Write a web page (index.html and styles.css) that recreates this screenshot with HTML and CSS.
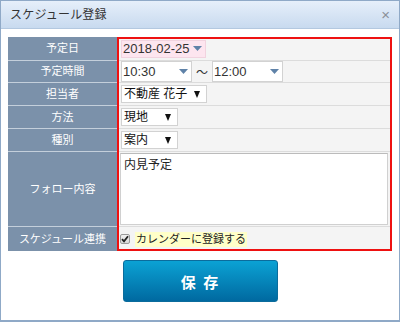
FILE: index.html
```html
<!DOCTYPE html>
<html lang="ja">
<head>
<meta charset="utf-8">
<link rel="stylesheet" href="styles.css">
</head>
<body>
<div class="window">
  <div class="titlebar">
    <span class="title">スケジュール登録</span>
    <span class="close">×</span>
  </div>
  <div class="content">
    <div class="form">
      <div class="lbl r1">予定日</div>
      <div class="val r1">
        <div class="date"><span>2018-02-25</span><svg class="tri" width="9" height="5" viewBox="0 0 9 5"><path d="M0 0H9L4.5 5Z" fill="#5f82a8"/></svg></div>
      </div>
      <div class="lbl r2">予定時間</div>
      <div class="val r2">
        <div class="time">10:30<svg class="tri" width="9" height="5" viewBox="0 0 9 5"><path d="M0 0H9L4.5 5Z" fill="#5f82a8"/></svg></div>
        <span class="tilde">～</span>
        <div class="time">12:00<svg class="tri" width="9" height="5" viewBox="0 0 9 5"><path d="M0 0H9L4.5 5Z" fill="#5f82a8"/></svg></div>
      </div>
      <div class="lbl r3">担当者</div>
      <div class="val r3">
        <div class="sel w86">不動産 花子<svg class="btri" width="6" height="7" viewBox="0 0 6 7"><path d="M0 0H6L3 7Z" fill="#111"/></svg></div>
      </div>
      <div class="lbl r4">方法</div>
      <div class="val r4">
        <div class="sel w57">現地<svg class="btri" width="6" height="7" viewBox="0 0 6 7"><path d="M0 0H6L3 7Z" fill="#111"/></svg></div>
      </div>
      <div class="lbl r5">種別</div>
      <div class="val r5">
        <div class="sel w57">案内<svg class="btri" width="6" height="7" viewBox="0 0 6 7"><path d="M0 0H6L3 7Z" fill="#111"/></svg></div>
      </div>
      <div class="lbl r6">フォロー内容</div>
      <div class="val r6">
        <div class="textarea">内見予定</div>
      </div>
      <div class="lbl r7">スケジュール連携</div>
      <div class="val r7">
        <span class="check"><svg width="8" height="8" viewBox="0 0 8 8"><path d="M1 4.2L3 6.3L7 1.2" fill="none" stroke="#222" stroke-width="1.8"/></svg></span>
        <span class="chklabel">カレンダーに登録する</span>
      </div>
      <div class="highlight"></div>
    </div>
    <div class="actions">
      <button class="save">保 存</button>
    </div>
  </div>
</div>
</body>
</html>
```
FILE: styles.css
```css
html, body {
  margin: 0;
  padding: 0;
  background: #fff;
}
body {
  font-family: "Liberation Sans", "Noto Sans CJK JP", sans-serif;
}
.window {
  width: 400px;
  height: 322px;
  box-sizing: border-box;
  border: 1px solid #8fa9c7;
  border-bottom-width: 2px;
  background: #fff;
  overflow: hidden;
}
.titlebar {
  height: 27px;
  border-bottom: 1px solid #b3c8e0;
  background: linear-gradient(#e6effa, #c8daef);
  display: flex;
  align-items: center;
  justify-content: space-between;
  padding: 0 9px 0 9px;
}
.title {
  font-size: 12px;
  color: #333;
  line-height: 14px;
  letter-spacing: 0.2px;
}
.close {
  font-size: 15px;
  color: #8a8f98;
  line-height: 14px;
}
.content {
  padding: 8px 0 0 7px;
}
.form {
  display: grid;
  width: 384px;
  grid-template-columns: 109px 275px;
  grid-template-rows: 24px 22px 23px 23px 23px 75px 24px;
}
.lbl {
  grid-column: 1;
  background: #7b91aa;
  color: #fff;
  font-size: 11px;
  line-height: 13px;
  display: flex;
  align-items: center;
  justify-content: center;
  border-bottom: 1px solid #c4cfdb;
  box-sizing: border-box;
}
.r7.lbl { border-bottom: none; }
.val {
  grid-column: 2;
  background: #f4f4f4;
  border-bottom: 1px solid #dcdcdc;
  box-sizing: border-box;
  display: flex;
  align-items: center;
  padding-left: 4px;
  font-size: 12px;
  color: #222;
  white-space: nowrap;
}
.r1 { grid-row: 1; }
.r2 { grid-row: 2; }
.r3 { grid-row: 3; }
.r4 { grid-row: 4; }
.r5 { grid-row: 5; }
.r6 { grid-row: 6; }
.r7 { grid-row: 7; }
.val.r7 { border-bottom: none; }
.highlight {
  grid-column: 2;
  grid-row: 1 / -1;
  border: 2px solid #ee1111;
  pointer-events: none;
}
.date {
  height: 18px;
  box-sizing: border-box;
  background: #fde5ef;
  border: 1px solid #f1d3df;
  font-size: 13px;
  line-height: 16px;
  color: #333;
  display: flex;
  align-items: center;
  padding: 0 3px 0 1px;
  gap: 3px;
  white-space: nowrap;
  flex-shrink: 0;
}
.time {
  width: 71px;
  height: 21px;
  box-sizing: border-box;
  background: #fff;
  border: 1px solid #d2d2d2;
  font-size: 13px;
  color: #333;
  display: flex;
  align-items: center;
  justify-content: space-between;
  padding: 0 3px 0 1px;
}
.tilde {
  width: 20px;
  text-align: center;
  font-size: 12px;
  color: #333;
}
.sel {
  height: 18px;
  box-sizing: border-box;
  background: #fff;
  border: 1px solid #d2d2d2;
  font-size: 12px;
  line-height: 14px;
  color: #111;
  display: flex;
  align-items: center;
  justify-content: space-between;
  padding: 0 6px 0 2px;
}
.w86 { width: 86px; }
.w57 { width: 57px; }
.r6.val {
  align-items: flex-start;
  padding-left: 3px;
  padding-top: 1px;
}
.textarea {
  width: 268px;
  height: 72px;
  box-sizing: border-box;
  background: #fff;
  border: 1px solid #d0d0d0;
  border-top-color: #bbb;
  font-size: 12px;
  line-height: 14px;
  color: #222;
  padding: 4px 3px;
}
.r7.val {
  padding-left: 3px;
  gap: 5px;
}
.check {
  width: 10px;
  height: 10px;
  box-sizing: border-box;
  border: 1px solid #9a9a9a;
  background: linear-gradient(#f2f2f2, #d8d8d8);
  border-radius: 2px;
  display: flex;
  align-items: center;
  justify-content: center;
}
.chklabel {
  background: #ffffc8;
  font-size: 11px;
  line-height: 13px;
  padding: 1px 1px;
  color: #222;
}
.actions {
  padding: 9px 0 0 115px;
}
.save {
  width: 155px;
  height: 42px;
  margin: 0;
  border: 1px solid #0b6c9c;
  border-radius: 3px;
  background: linear-gradient(#0ba2d4, #0069a0);
  color: #fff;
  font-family: "Noto Sans CJK JP", sans-serif;
  font-size: 15px;
  font-weight: bold;
  letter-spacing: 2px;
  padding: 0;
}
```
